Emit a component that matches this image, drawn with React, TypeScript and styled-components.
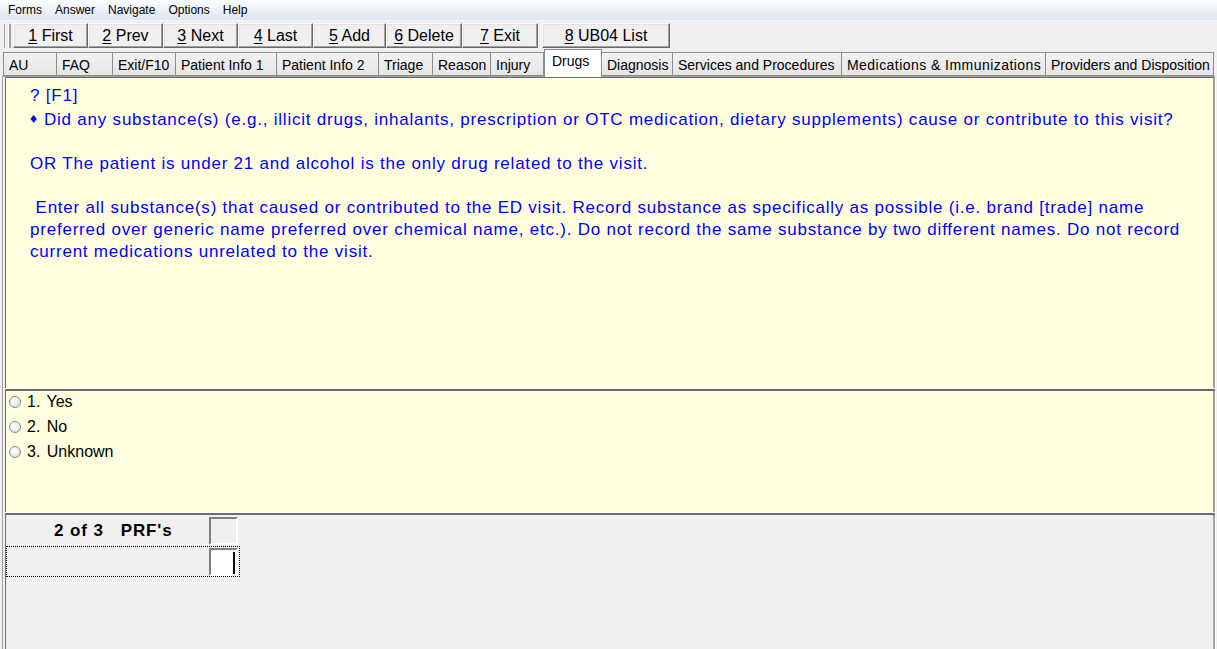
import React from "react";
import styled, { createGlobalStyle } from "styled-components";

const GlobalStyle = createGlobalStyle`
  html, body {
    margin: 0;
    padding: 0;
    background: #f0f0f0;
    overflow: hidden;
  }
  body {
    font-family: "Liberation Sans", Arial, sans-serif;
  }
`;

const Window = styled.div`
  width: 1217px;
  height: 649px;
  display: flex;
  flex-direction: column;
  background: #f0f0f0;
  overflow: hidden;
`;

const MenuBar = styled.div`
  height: 20px;
  display: flex;
  align-items: center;
  padding-left: 8px;
  gap: 13px;
  background: linear-gradient(#fafcfe, #dfe7f2);
  border-bottom: 1px solid #f5f7fa;
  font-size: 12px;
  color: #000;
`;

const MenuItem = styled.span`
  cursor: default;
`;

const ToolBar = styled.div`
  height: 27px;
  display: flex;
  align-items: flex-end;
  padding-left: 4px;
`;

const Grip = styled.div`
  width: 3px;
  height: 24px;
  margin-right: 4px;
  border-left: 1px solid #a0a0a0;
  border-right: 1px solid #ffffff;
  box-shadow: 2px 0 0 #a0a0a0;
`;

const ToolButton = styled.button<{ $w: number; $gap?: number }>`
  width: ${(p) => p.$w}px;
  height: 25px;
  margin: 0 0 0 ${(p) => p.$gap ?? 0}px;
  padding: 0;
  font-family: "Liberation Sans", Arial, sans-serif;
  font-size: 16px;
  color: #000;
  background: #f0f0f0;
  border: 1px solid;
  border-color: #ffffff #696969 #696969 #ffffff;
  box-shadow: inset -1px -1px 0 #a0a0a0, inset 1px 1px 0 #e3e3e3;
  u {
    text-decoration: underline;
    text-underline-offset: 2px;
  }
`;

const TabStrip = styled.div`
  height: 28px;
  display: flex;
  align-items: flex-end;
  padding-left: 3px;
  position: relative;
  z-index: 1;
`;

const Tab = styled.div<{ $w: number; $active?: boolean }>`
  width: ${(p) => p.$w}px;
  box-sizing: border-box;
  height: ${(p) => (p.$active ? 28 : 24)}px;
  margin-bottom: ${(p) => (p.$active ? -1 : 0)}px;
  padding: ${(p) => (p.$active ? "3px 0 0 7px" : "4px 0 0 5px")};
  font-size: 14px;
  color: #000;
  white-space: nowrap;
  background: ${(p) =>
    p.$active ? "#ffffff" : "linear-gradient(#f2f2f2, #e6e6e6)"};
  border: 1px solid #898c95;
  border-bottom: ${(p) => (p.$active ? "none" : "1px solid #898c95")};
  border-left: ${(p) => (p.$active ? "1px solid #898c95" : "none")};
  &:first-child {
    border-left: 1px solid #898c95;
  }
`;

const TabText = styled.span<{ $spacing?: number }>`
  letter-spacing: ${(p) => p.$spacing ?? 0}px;
`;

const Panel = styled.div`
  flex: 1;
  display: flex;
  flex-direction: column;
  margin: 0 1px 0 2px;
  border-left: 1px solid #a0a0a0;
  border-right: 1px solid #ffffff;
  border-top: 1px solid #a0a0a0;
  padding: 0 0 0 2px;
`;

const Question = styled.div`
  height: 311px;
  box-sizing: border-box;
  background: #ffffe0;
  border-left: 1px solid #6d6d6d;
  border-top: 1px solid #6d6d6d;
  border-right: 2px solid #a0a0a0;
  padding: 7px 12px 0 24px;
  color: #0000ff;
  font-size: 17px;
  letter-spacing: 0.78px;
  line-height: 22px;
`;

const Line = styled.div`
  min-height: 22px;
  white-space: pre-wrap;
`;

const Diamond = styled.span`
  display: inline-block;
  width: 14px;
  font-size: 14px;
  vertical-align: 2px;
`;

const Divider = styled.div`
  height: 3px;
  border-top: 1px solid #ffffff;
  border-bottom: 2px solid #6d6d6d;
  background: #e6e6e6;
  box-sizing: border-box;
`;

const Answers = styled.div`
  height: 121px;
  box-sizing: border-box;
  background: #ffffe0;
  border-left: 1px solid #6d6d6d;
  border-right: 2px solid #a0a0a0;
  padding: 2px 0 0 3px;
`;

const Option = styled.label`
  height: 25px;
  display: flex;
  align-items: flex-start;
  gap: 6px;
  font-size: 16px;
  line-height: 18px;
  color: #000;
`;

const Radio = styled.span`
  width: 12px;
  height: 12px;
  margin-top: 3px;
  box-sizing: border-box;
  border-radius: 50%;
  border: 1px solid #8a8a8a;
  background: radial-gradient(circle at 35% 35%, #ffffff, #dcdcdc);
  flex: none;
`;

const OptionText = styled.span`
  white-space: pre;
  word-spacing: 2px;
`;

const Footer = styled.div`
  flex: 1;
  border-left: 1px solid #6d6d6d;
  border-right: 2px solid #a0a0a0;
  background: #f0f0f0;
  padding: 1px 0 0 0;
`;

const CountRow = styled.div`
  height: 29px;
  display: flex;
  align-items: center;
`;

const CountLabel = styled.div`
  width: 203px;
  padding-left: 48px;
  box-sizing: border-box;
  font-size: 17px;
  font-weight: bold;
  letter-spacing: 0.9px;
  white-space: pre;
`;

const CellBox = styled.div<{ $white?: boolean }>`
  width: 29px;
  height: 28px;
  box-sizing: border-box;
  border: 2px solid;
  border-color: #808080 #ffffff #ffffff #808080;
  background: ${(p) => (p.$white ? "#ffffff" : "#f0f0f0")};
  position: relative;
`;

const Caret = styled.span`
  position: absolute;
  right: 1px;
  top: 2px;
  width: 2px;
  height: 22px;
  background: #000;
`;

const FocusRow = styled.div`
  width: 234px;
  height: 31px;
  box-sizing: border-box;
  margin-top: 1px;
  border: 1px dotted #000;
  display: flex;
  justify-content: flex-end;
  align-items: center;
  padding-right: 1px;
`;

const buttons = [
  { n: "1", label: "First", w: 75 },
  { n: "2", label: "Prev", w: 75 },
  { n: "3", label: "Next", w: 75 },
  { n: "4", label: "Last", w: 75 },
  { n: "5", label: "Add", w: 73 },
  { n: "6", label: "Delete", w: 76 },
  { n: "7", label: "Exit", w: 76 },
];

const tabs = [
  { label: "AU", w: 54 },
  { label: "FAQ", w: 56 },
  { label: "Exit/F10", w: 63 },
  { label: "Patient Info 1", w: 101 },
  { label: "Patient Info 2", w: 102 },
  { label: "Triage", w: 54 },
  { label: "Reason", w: 58 },
  { label: "Injury", w: 53 },
  { label: "Drugs", w: 58, active: true },
  { label: "Diagnosis", w: 71 },
  { label: "Services and Procedures", w: 169 },
  { label: "Medications & Immunizations", w: 204, spacing: 0.45 },
  { label: "Providers and Disposition", w: 168 },
];

const menus = ["Forms", "Answer", "Navigate", "Options", "Help"];

const options = ["1. Yes", "2. No", "3. Unknown"];

const App = () => {
  return (
    <Window>
      <GlobalStyle />
      <MenuBar>
        {menus.map((m) => (
          <MenuItem key={m}>{m}</MenuItem>
        ))}
      </MenuBar>
      <ToolBar>
        <Grip />
        {buttons.map((b) => (
          <ToolButton key={b.n} $w={b.w}>
            <u>{b.n}</u> {b.label}
          </ToolButton>
        ))}
        <ToolButton $w={128} $gap={4}>
          <u>8</u> UB04 List
        </ToolButton>
      </ToolBar>
      <TabStrip>
        {tabs.map((t) => (
          <Tab key={t.label} $w={t.w} $active={t.active}>
            <TabText $spacing={t.spacing}>{t.label}</TabText>
          </Tab>
        ))}
      </TabStrip>
      <Panel>
        <Question>
          <Line>? [F1]</Line>
          <Line>
            <Diamond>♦</Diamond>Did any substance(s) (e.g., illicit drugs,
            inhalants, prescription or OTC medication, dietary supplements)
            cause or contribute to this visit?
          </Line>
          <Line />
          <Line>OR The patient is under 21 and alcohol is the only drug related to the visit.</Line>
          <Line />
          <Line>
            {" "}Enter all substance(s) that caused or contributed to the ED
            visit. Record substance as specifically as possible (i.e. brand
            [trade] name preferred over generic name preferred over chemical
            name, etc.). Do not record the same substance by two different
            names. Do not record current medications unrelated to the visit.
          </Line>
        </Question>
        <Divider />
        <Answers>
          {options.map((o) => (
            <Option key={o}>
              <Radio />
              <OptionText>{o}</OptionText>
            </Option>
          ))}
        </Answers>
        <Divider />
        <Footer>
          <CountRow>
            <CountLabel>{"2 of 3   PRF's"}</CountLabel>
            <CellBox />
          </CountRow>
          <FocusRow>
            <CellBox $white>
              <Caret />
            </CellBox>
          </FocusRow>
        </Footer>
      </Panel>
    </Window>
  );
};

export default App;
